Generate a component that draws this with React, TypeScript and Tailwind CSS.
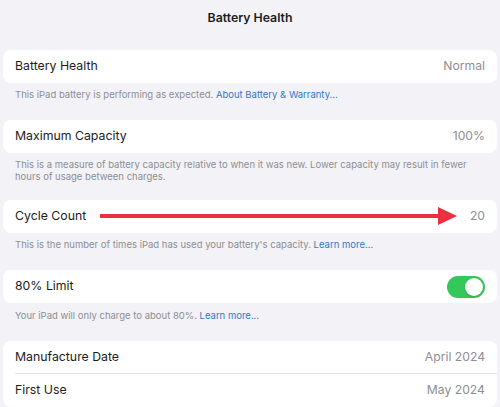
import React from "react";

const font = { fontFamily: "Inter, 'Liberation Sans', sans-serif" };

const Row: React.FC<{ label: string; value?: React.ReactNode; divider?: boolean }> = ({ label, value, divider }) => (
  <div className="relative flex items-center justify-between h-[33px] pl-3 pr-3">
    <span className="text-[12.3px] text-[#1c1c1e]">{label}</span>
    {value}
    {divider && <div className="absolute bottom-0 left-3 right-0 h-px bg-[#e3e3e8]" />}
  </div>
);

const Value: React.FC<{ children: React.ReactNode }> = ({ children }) => (
  <span className="text-[12.2px] text-[#8e8e93]">{children}</span>
);

const Footer: React.FC<{ children: React.ReactNode; className?: string }> = ({ children, className }) => (
  <p className={`px-3 text-[9.5px] leading-[12px] text-[#8e8e93] ${className ?? ""}`}>{children}</p>
);

const Link: React.FC<{ children: React.ReactNode }> = ({ children }) => (
  <span className="text-[#3478c6]">{children}</span>
);

export default function App() {
  return (
    <div style={font} className="w-[500px] h-[407px] overflow-hidden bg-[#f2f2f7] px-[3px]">
      {/* Header */}
      <div className="h-[36px] flex items-center justify-center">
        <h1 className="text-[12.3px] font-semibold text-[#1c1c1e]">Battery Health</h1>
      </div>

      {/* Battery Health */}
      <div className="mt-[14px] bg-white rounded-lg">
        <Row label="Battery Health" value={<Value>Normal</Value>} />
      </div>
      <Footer className="mt-[6px]">
        This iPad battery is performing as expected. <Link>About Battery &amp; Warranty...</Link>
      </Footer>

      {/* Maximum Capacity */}
      <div className="mt-[19px] bg-white rounded-lg">
        <Row label="Maximum Capacity" value={<Value>100%</Value>} />
      </div>
      <Footer className="mt-[6px]">
        This is a measure of battery capacity relative to when it was new. Lower capacity may result in fewer hours of usage between charges.
      </Footer>

      {/* Cycle Count */}
      <div className="relative mt-[17px] bg-white rounded-lg">
        <Row label="Cycle Count" value={<Value>20</Value>} />
        <svg className="absolute left-0 top-0 pointer-events-none" width="494" height="33" viewBox="0 0 494 33">
          <line x1="97" y1="16" x2="438" y2="16" stroke="#ec3040" strokeWidth="4" />
          <polygon points="435,7 454,16 435,25" fill="#ec3040" />
        </svg>
      </div>
      <Footer className="mt-[6px]">
        This is the number of times iPad has used your battery's capacity. <Link>Learn more...</Link>
      </Footer>

      {/* 80% Limit */}
      <div className="mt-[19px] bg-white rounded-lg">
        <Row
          label="80% Limit"
          value={
            <div className="w-[38px] h-[22px] rounded-full bg-[#34c759] p-[2px] flex justify-end">
              <div className="w-[18px] h-[18px] rounded-full bg-white shadow" />
            </div>
          }
        />
      </div>
      <Footer className="mt-[7px]">
        Your iPad will only charge to about 80%. <Link>Learn more...</Link>
      </Footer>

      {/* Dates */}
      <div className="mt-[19px] bg-white rounded-lg">
        <Row label="Manufacture Date" value={<Value>April 2024</Value>} divider />
        <Row label="First Use" value={<Value>May 2024</Value>} />
      </div>
    </div>
  );
}
